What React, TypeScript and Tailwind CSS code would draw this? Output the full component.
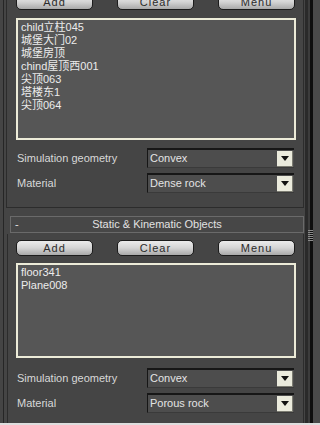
import React from "react";

const Btn = ({ label }: { label: string }) => (
  <div className="w-[77px] h-[16px] rounded-[5px] border border-[#1c1c1c] bg-gradient-to-b from-[#ececec] via-[#d4d4d4] to-[#a9a9a9] flex items-center justify-center text-[11px] leading-none text-[#2b2b2b] tracking-[1px]">
    {label}
  </div>
);

const ButtonRow = () => (
  <div className="flex gap-[24px] h-[16px]">
    <Btn label="Add" />
    <Btn label="Clear" />
    <Btn label="Menu" />
  </div>
);

const ListBox = ({ items, h }: { items: string[]; h: string }) => (
  <div
    className={`w-[280px] ${h} border-2 border-[#ecebd8] bg-[#565656] pt-[1px] pl-[3px] text-[11px] leading-[13px] text-[#ececec] font-['Liberation_Sans','Noto_Sans_CJK_SC',sans-serif]`}
  >
    {items.map((t) => (
      <div key={t}>{t}</div>
    ))}
  </div>
);

const Dropdown = ({ value }: { value: string }) => (
  <div className="w-[147px] h-[20px] mr-[2px] bg-[#4d4d4d] border-t-2 border-l border-[#161616] border-b border-b-[#3a3a3a] flex items-center justify-between">
    <span className="pl-[2px] text-[11px] text-[#e4e4e4]">{value}</span>
    <div className="w-[16px] h-[16px] mr-[1px] bg-[#ebebdd] border-r border-b border-[#7c7c72] flex items-center justify-center">
      <svg width="8" height="5" viewBox="0 0 8 5">
        <polygon points="0,0 8,0 4,5" fill="#111" />
      </svg>
    </div>
  </div>
);

const Field = ({ label, value }: { label: string; value: string }) => (
  <div className="flex items-center justify-between h-[20px]">
    <span className="pl-[1px] text-[11px] text-[#d8d8d8]">{label}</span>
    <Dropdown value={value} />
  </div>
);

export default function App() {
  return (
    <div className="w-[320px] h-[425px] overflow-hidden bg-[#454545] flex flex-col font-['Liberation_Sans',sans-serif]">
      <div className="flex h-[423px] relative">
        <div className="w-[3px]" />
        {/* main column */}
        <div className="w-[301px] border-l border-[#262626] flex flex-col">
          {/* rollout 1 (scrolled up) */}
          <div className="ml-[2px] border-l border-r border-b border-[#2c2c2c] pl-[9px] pr-[7px] pb-[14px] flex flex-col">
            <div className="mt-[-6px]">
              <ButtonRow />
            </div>
            <div className="mt-[8px]">
              <ListBox
                h="h-[122px]"
                items={[
                  "child立柱045",
                  "城堡大门02",
                  "城堡房顶",
                  "chind屋顶西001",
                  "尖顶063",
                  "塔楼东1",
                  "尖顶064",
                ]}
              />
            </div>
            <div className="mt-[8px]">
              <Field label="Simulation geometry" value="Convex" />
            </div>
            <div className="mt-[5px]">
              <Field label="Material" value="Dense rock" />
            </div>
          </div>

          {/* rollout 2 header */}
          <div className="mt-[8px] ml-[6px] h-[17px] border border-[#6a6a6a] bg-[#474747] flex items-center text-[11px] text-[#e2e2e2]">
            <span className="w-[8px] pl-[4px] leading-none">-</span>
            <span className="flex-1 text-center pr-[8px]">Static &amp; Kinematic Objects</span>
          </div>

          {/* rollout 2 */}
          <div className="mt-[1px] ml-[3px] flex-1 border-l border-r border-[#2c2c2c] pl-[8px] pr-[7px] pt-[6px] flex flex-col">
            <ButtonRow />
            <div className="mt-[7px]">
              <ListBox h="h-[95px]" items={["floor341", "Plane008"]} />
            </div>
            <div className="mt-[10px]">
              <Field label="Simulation geometry" value="Convex" />
            </div>
            <div className="mt-[5px]">
              <Field label="Material" value="Porous rock" />
            </div>
          </div>
        </div>

        {/* right edge strip */}
        <div className="w-[1px] bg-[#454545]" />
        <div className="w-[3px] bg-[#2a2a2a]" />
        <div className="w-[2px] bg-[#3c3c3c]" />
        <div className="w-[3px] bg-[#0e0e0e]" />
        <div className="w-[7px] bg-[#4a4a4a]" />

        {/* splitter grip */}
        <div className="absolute left-[308px] top-[230px] w-[5px] h-[12px] flex flex-col gap-[1px]">
          {Array.from({ length: 6 }).map((_, i) => (
            <div key={i} className="h-[1px] bg-[#8a8a8a]" />
          ))}
        </div>
      </div>
      <div className="h-[2px] bg-[#dedede]" />
    </div>
  );
}
